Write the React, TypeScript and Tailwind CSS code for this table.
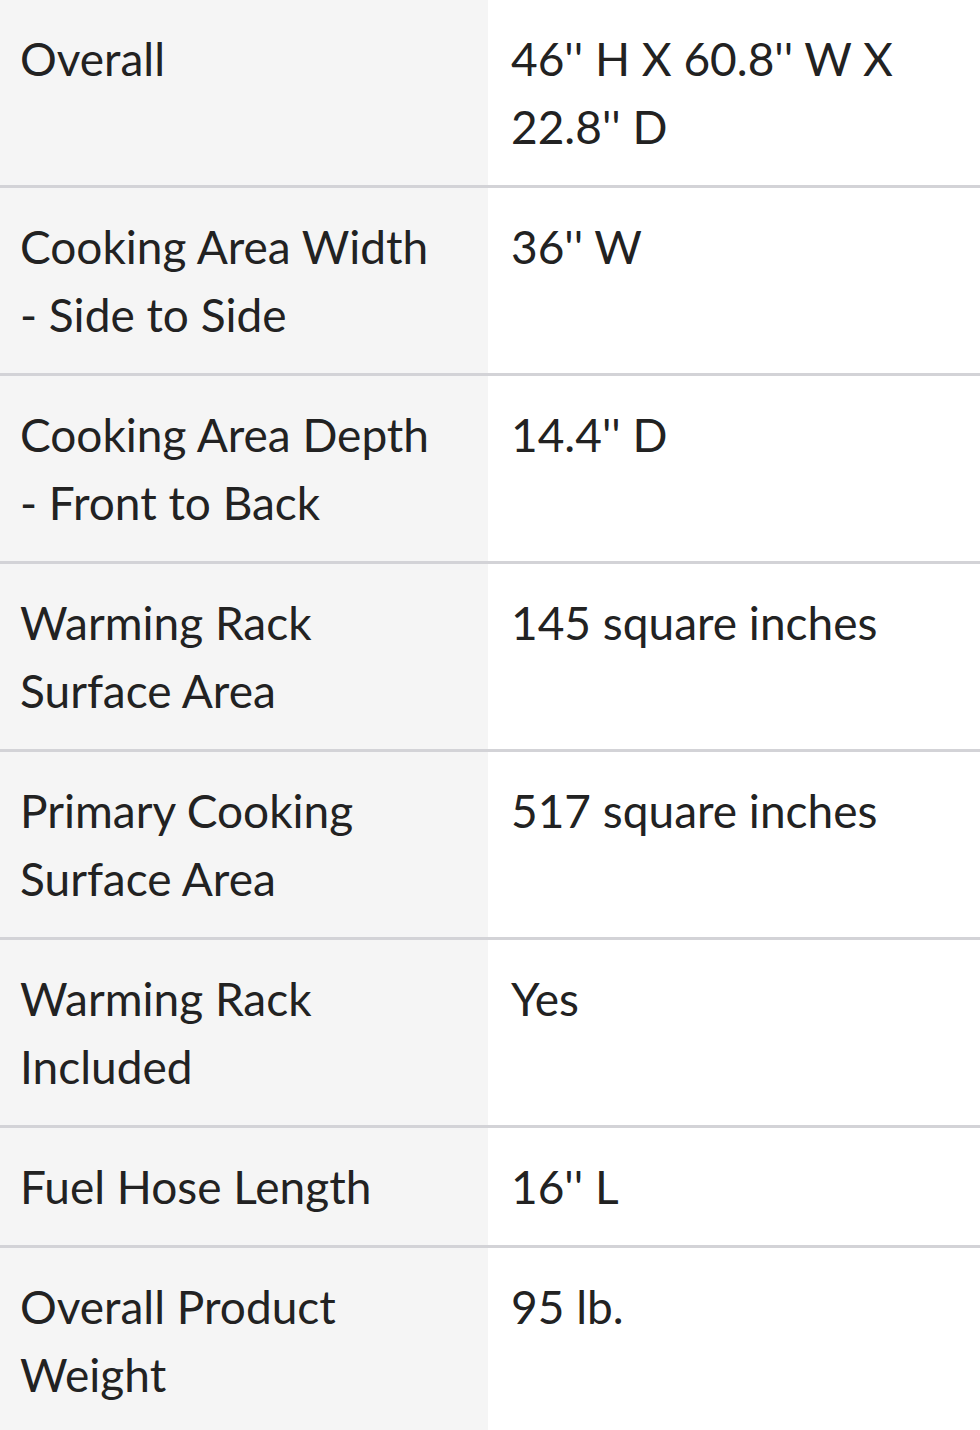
import React from 'react';

const specs: [string, string][] = [
  ['Overall', "46'' H X 60.8'' W X 22.8'' D"],
  ['Cooking Area Width - Side to Side', "36'' W"],
  ['Cooking Area Depth - Front to Back', "14.4'' D"],
  ['Warming Rack Surface Area', '145 square inches'],
  ['Primary Cooking Surface Area', '517 square inches'],
  ['Warming Rack Included', 'Yes'],
  ['Fuel Hose Length', "16'' L"],
  ['Overall Product Weight', '95 lb.'],
];

export default function App() {
  return (
    <div className="w-[980px] h-[1430px] overflow-hidden bg-white font-['Lato',sans-serif] text-[46px] leading-[68px] text-[#222222]">
      {specs.map(([label, value], i) => (
        <div key={i} className="grid grid-cols-[488px_1fr] border-b-[3px] border-[#d3d3d7]">
          <div className="bg-[#f5f5f5] pl-[20px] pr-[46px] pt-[25px] pb-[24px]">{label}</div>
          <div className="bg-white pl-[23px] pr-[60px] pt-[25px] pb-[24px]">{value}</div>
        </div>
      ))}
    </div>
  );
}
